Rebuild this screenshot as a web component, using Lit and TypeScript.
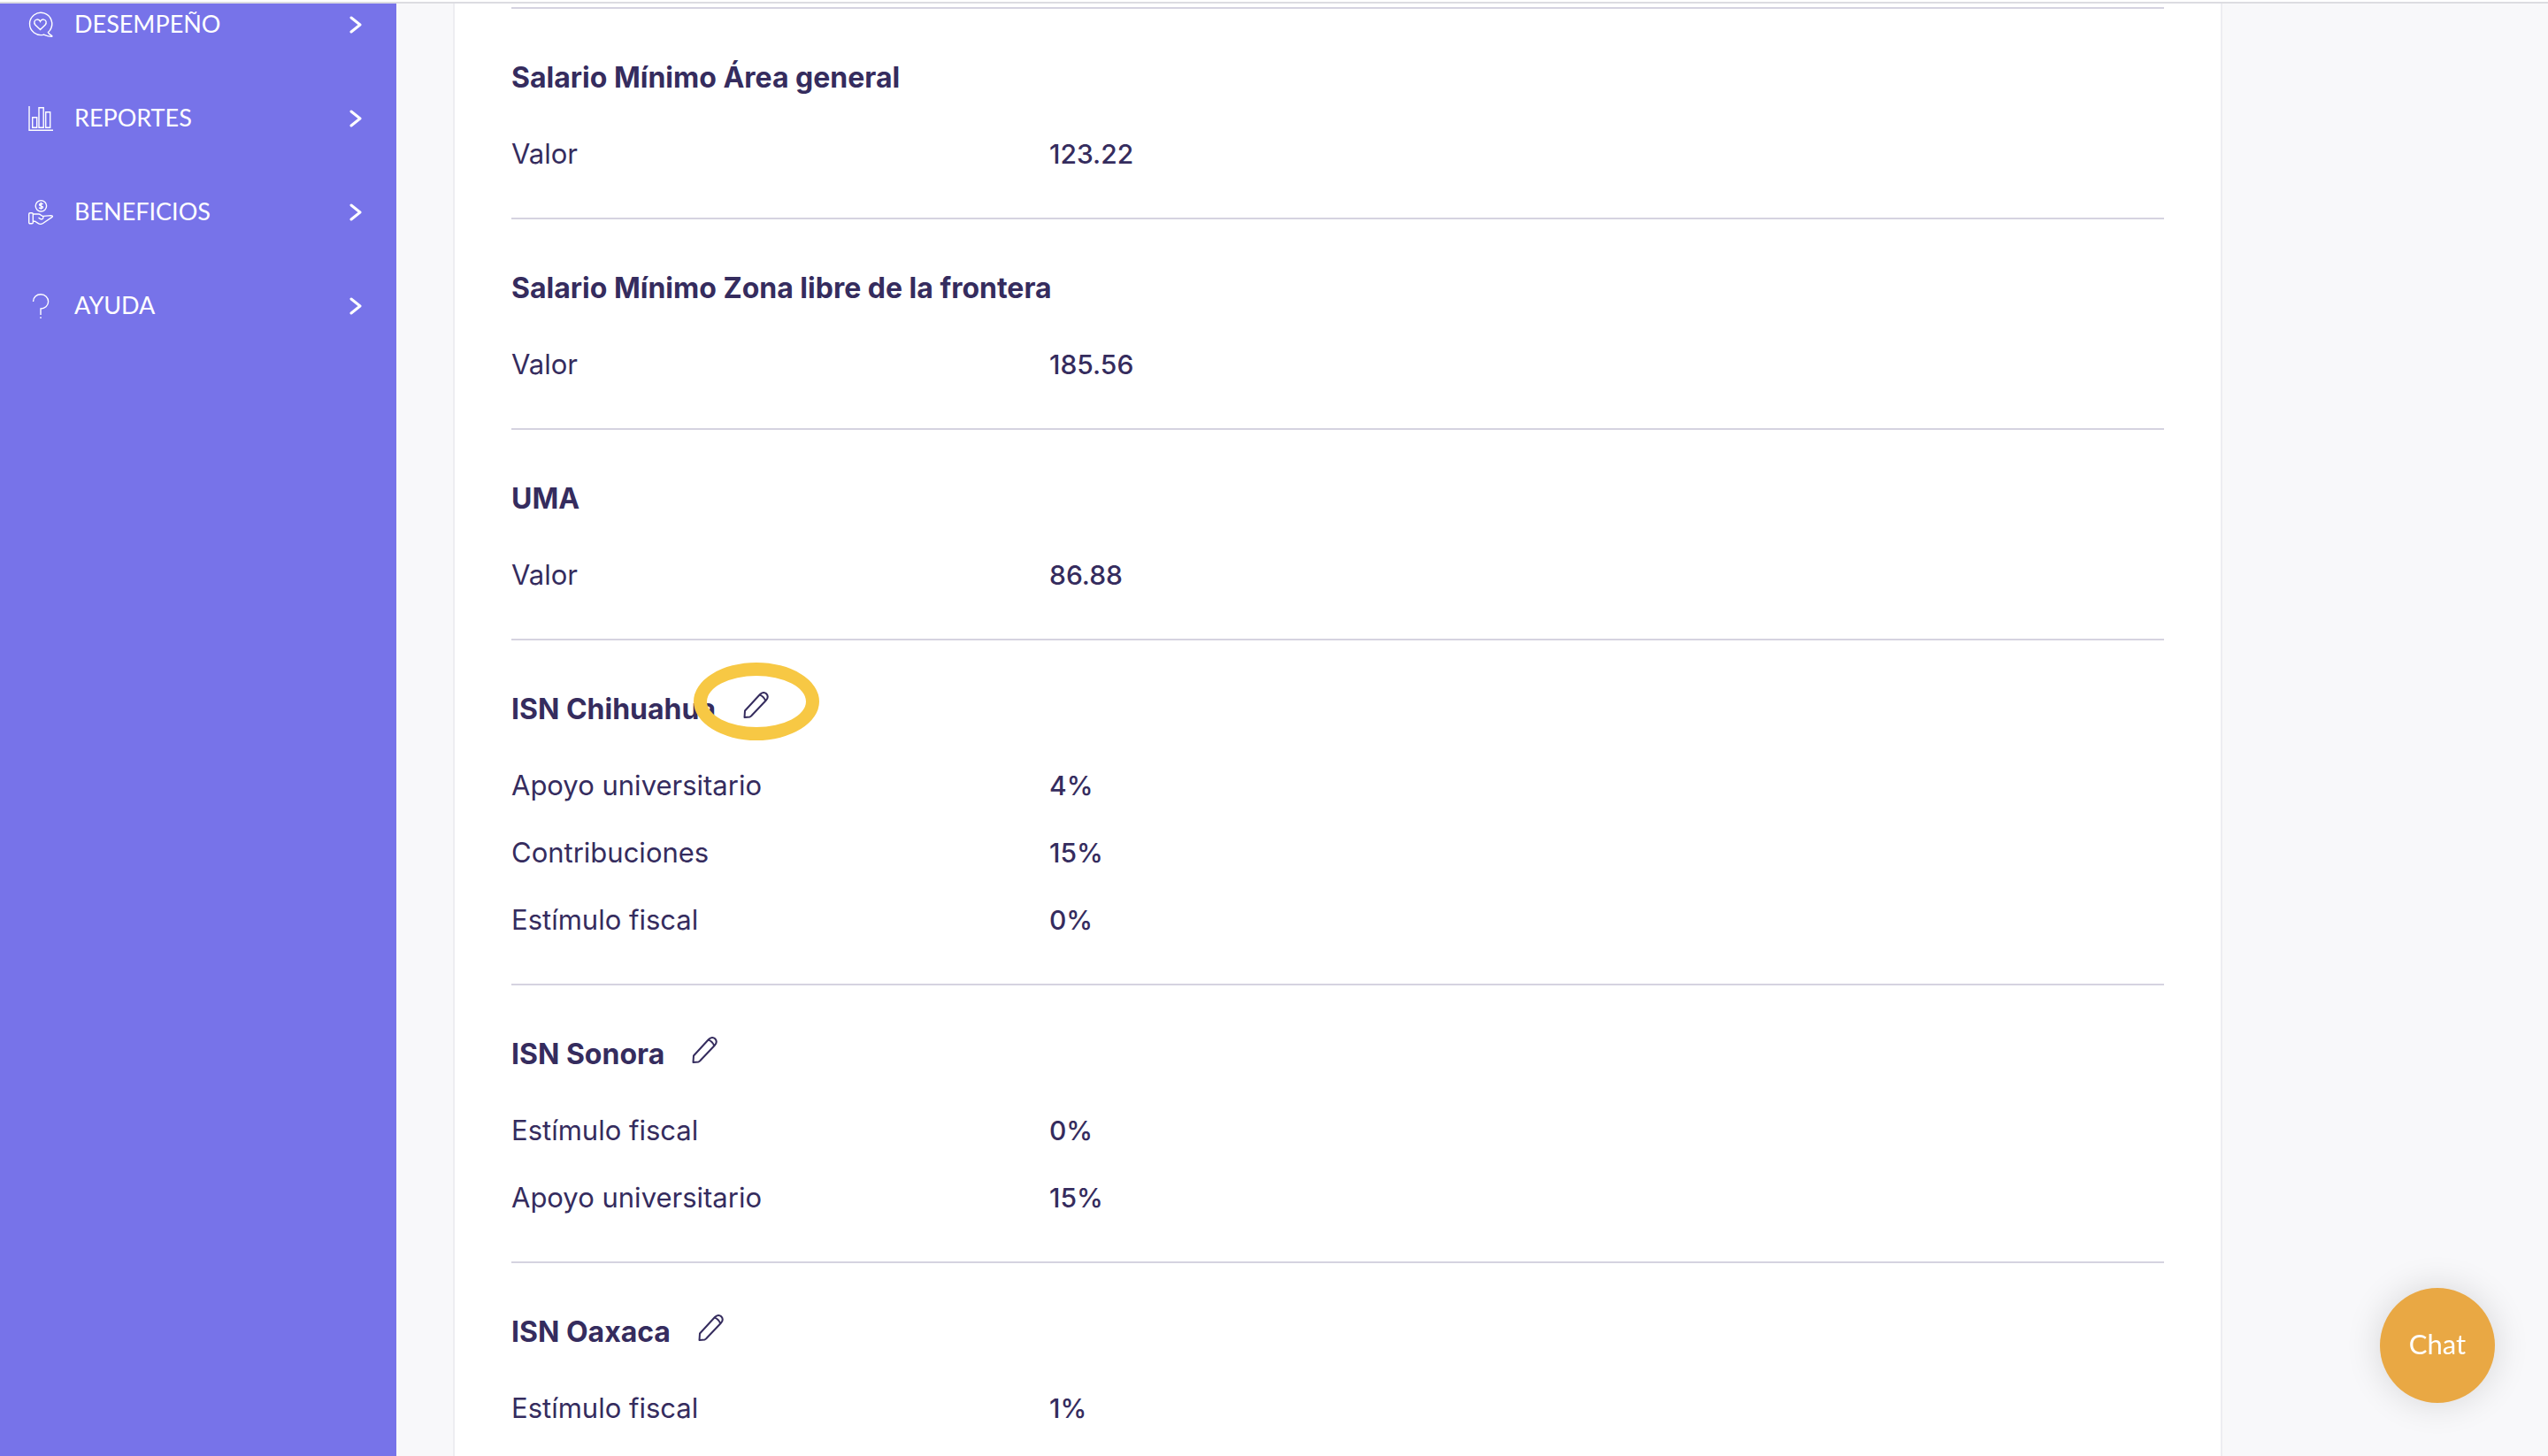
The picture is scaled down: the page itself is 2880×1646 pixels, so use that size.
import { LitElement, html, css, svg } from "lit";
import { customElement } from "lit/decorators.js";

interface Section { title: string; editable?: boolean; marked?: boolean; rows: [string, string][]; }

const sections: Section[] = [
  { title: "Salario Mínimo Área general", rows: [["Valor", "123.22"]] },
  { title: "Salario Mínimo Zona libre de la frontera", rows: [["Valor", "185.56"]] },
  { title: "UMA", rows: [["Valor", "86.88"]] },
  { title: "ISN Chihuahua", editable: true, marked: true, rows: [["Apoyo universitario", "4%"], ["Contribuciones", "15%"], ["Estímulo fiscal", "0%"]] },
  { title: "ISN Sonora", editable: true, rows: [["Estímulo fiscal", "0%"], ["Apoyo universitario", "15%"]] },
  { title: "ISN Oaxaca", editable: true, rows: [["Estímulo fiscal", "1%"]] },
];

const icons = {
  performance: svg`<path d="M22.4 22.6C23 24 25.4 25.800 26.800 26.700C27.200 27.200 26.600 27.400 26 27.400C22.400 27.400 19.600 26 17.600 25.100A12.600 12.600 0 1 1 24.600 20C24 21 23 21.800 22.400 22.600Z"/><path d="M13.500 19.600L8 14.200C5.800 11.700 6.800 8.500 9.500 8.100C11.400 7.800 12.900 8.800 13.500 10.200C14.100 8.800 15.600 7.800 17.500 8.100C20.200 8.500 21.200 11.700 19 14.200Z"/>`,
  reports: svg`<path d="M1 0V27.200H28M4.700 12.700h5V24.300h-5zM12 1.700h5.200V24.300h-5.200zM19.700 6.700h5V24.300h-5z"/>`,
  benefits: svg`<circle cx="14.400" cy="6.800" r="6.200"/><path d="M16.500 4.900C16 4 12.600 3.700 12.500 5.500C12.400 7.200 16.600 6.400 16.500 8.300C16.400 10 12.800 9.800 12.200 8.600M14.400 2.800V10.800M2 14.700h2q1.300 0 1.300 1.300v9.500q0 1.300-1.300 1.300h-2q-1.300 0-1.300-1.300v-9.500q0-1.300 1.300-1.300zM5.300 16h6.200c2.500 0 3 2.200 5.200 2.400l9-.8c2.500 0 2 1.400.5 2.200L16.500 26.500c-2 1.300-4 1-5.500-.1L7.500 24.200H5.300M16.700 18.400c1 2.600-.7 4.200-3.200 2.900l-2-1.100"/>`,
  help: svg`<path d="M5.500 9C5.500 4 9.300 .800 14.200 .800C19 .800 22.600 4.500 22.600 9C22.600 13.500 18.500 17 14 17V24M14 26.200V28"/>`,
};

const menu = [
  { label: "DESEMPEÑO", icon: icons.performance },
  { label: "REPORTES", icon: icons.reports },
  { label: "BENEFICIOS", icon: icons.benefits },
  { label: "AYUDA", icon: icons.help },
];

@customElement("app-root")
export class AppRoot extends LitElement {
  static styles = css`
    :host { display: flex; flex-direction: column; height: 100vh; overflow: hidden; background: #f8f8fa; color: #352c5e; font-family: Inter, "Liberation Sans", sans-serif; }
    * { box-sizing: border-box; }
    .topbar { flex: none; height: 4px; background: #fff; border-bottom: 2px solid #dcdce1; }
    .shell { flex: 1; min-height: 0; display: flex; }
    .sidebar { flex: none; width: 448px; padding: 6px 39px 0 32px; background: #7773e9; }
    .menu { display: flex; flex-direction: column; gap: 72px; margin: 0; padding: 0; list-style: none; }
    .link { display: flex; align-items: center; height: 34px; color: #fff; font-family: Lato, sans-serif; font-size: 27px; line-height: 34px; text-decoration: none; }
    .link svg { margin-top: 2px; fill: none; stroke: #fff; }
    .icon { width: 28px; height: 28px; margin-right: 24px; stroke-width: 1.4; overflow: visible; }
    .chevron { width: 14px; height: 20px; margin-left: auto; stroke-width: 3; stroke-linecap: round; stroke-linejoin: round; }
    .main { flex: 1; min-width: 0; overflow: auto; scrollbar-width: none; padding: 0 368px 0 64px; }
    .card { min-height: 100%; padding: 4px 64px 0; background: #fff; border: solid #ededf1; border-width: 0 2px; }
    .section { border-top: 2px solid #d5d3e0; padding: 57px 0 52px; }
    .heading { display: flex; align-items: flex-start; gap: 29px; height: 42px; margin-bottom: 45px; }
    .title { margin: 0; font-size: 32px; line-height: 42px; font-weight: 700; }
    .edit { position: relative; width: 32px; height: 32px; padding: 0; border: 0; background: none; color: inherit; cursor: pointer; }
    .pencil { display: block; width: 32px; height: 32px; fill: none; stroke: currentColor; stroke-width: 2; stroke-linejoin: round; }
    .ring { position: absolute; left: -54px; top: -32px; width: 142px; height: 88px; border: 15px solid #f7c844; border-radius: 50%; }
    .rows { display: grid; gap: 36px; margin: 0; }
    .row { display: grid; grid-template-columns: 608px 1fr; height: 40px; font-size: 31px; line-height: 40px; }
    .value { margin: 0; font-size: 30px; font-weight: 500; }
    .chat { position: fixed; right: 60px; bottom: 60px; width: 130px; height: 130px; padding: 0 0 4px; border: 0; border-radius: 50%; background: #e9a844; color: #fff; font: 31px Lato, sans-serif; box-shadow: 0 0 40px rgba(0, 0, 0, 0.14); cursor: pointer; }
  `;

  render() {
    return html`
      <div class="topbar"></div>
      <div class="shell">
        <nav class="sidebar">
          <ul class="menu">
            ${menu.map((m) => html`<li><a class="link" href="#"><svg class="icon" viewBox="0 0 28 28" aria-hidden="true">${m.icon}</svg>${m.label}<svg class="chevron" viewBox="0 0 14 20" aria-hidden="true"><path d="M2 2L12 10L2 18"/></svg></a></li>`)}
          </ul>
        </nav>
        <main class="main">
          <div class="card">
            ${sections.map((s) => html`
              <section class="section">
                <div class="heading">
                  <h2 class="title">${s.title}</h2>
                  ${s.editable ? html`<button class="edit" aria-label="Editar ${s.title}">
                    <svg class="pencil" viewBox="0 0 32 32" aria-hidden="true"><path d="M3.500 30L4 22.500L21 4C23.500 1.400 26.500 1.600 28.200 3.300C30 5.200 30.300 8 27.800 10.700L11 28.500L9.500 29.500ZM20.500 4.600C23.500 5.500 26 8 27.200 11.200"/></svg>
                    ${s.marked ? html`<span class="ring"></span>` : ""}
                  </button>` : ""}
                </div>
                <dl class="rows">
                  ${s.rows.map(([label, value]) => html`<div class="row"><dt>${label}</dt><dd class="value">${value}</dd></div>`)}
                </dl>
              </section>`)}
          </div>
        </main>
      </div>
      <button class="chat">Chat</button>
    `;
  }
}
